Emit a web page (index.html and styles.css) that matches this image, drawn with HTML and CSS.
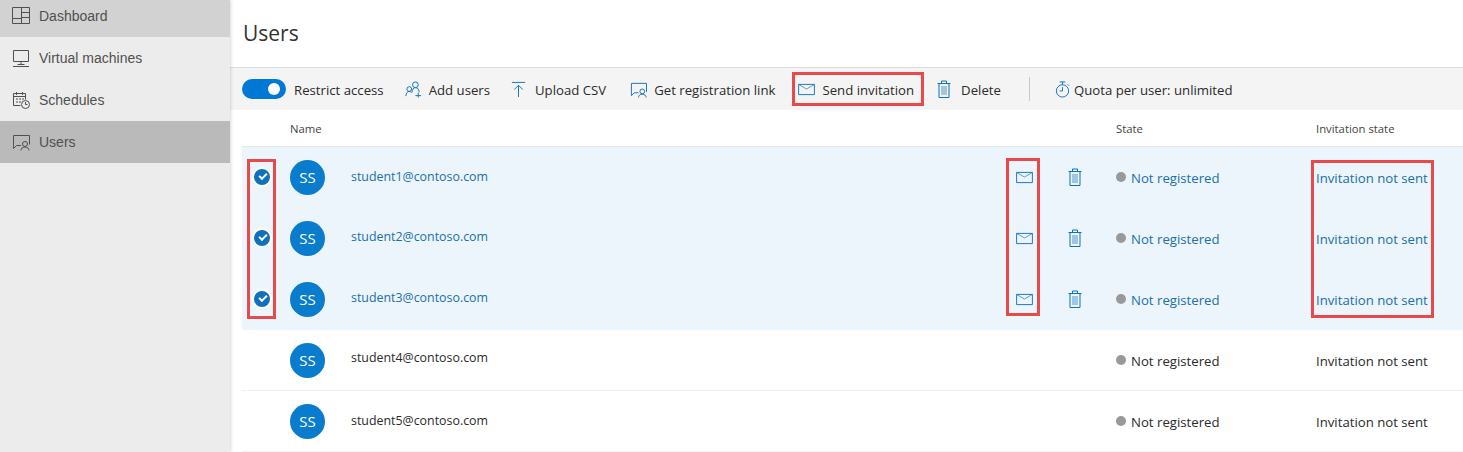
FILE: index.html
```html
<!DOCTYPE html>
<html lang="en">
<head>
  <meta charset="UTF-8">
  <title>Lab Services - Users</title>
  <link rel="stylesheet" href="styles.css">
</head>
<body>
  <svg class="defs" width="0" height="0">
    <symbol id="i-dashboard" viewBox="0 0 18 18"><path d="M.5 .5h17v16H.5zM9.500 .5v16M.5 11.500h9M9.500 5.500h8M9.500 10.500h8"/></symbol>
    <symbol id="i-vm" viewBox="0 0 18 18"><path d="M1.500 1.500h15v11h-15zM9 12.500v3M5.500 15.500h7M1 17.500h16"/></symbol>
    <symbol id="i-schedule" viewBox="0 0 18 18"><path d="M8.500 14.500H1.500v-12h12v6M1.500 5.500h12M4.500 1v3M10.500 1v3M4 8h2M7 8h2M10 8h2M4 11h2M7 11h2"/><circle cx="13.500" cy="13.500" r="4"/><path d="M13.500 11v2.500h2"/></symbol>
    <symbol id="i-users" viewBox="0 0 18 18"><path d="M9 12.500H4.500l-3 3v-3h0v-10h16v9"/><circle cx="13" cy="11" r="2.500"/><path d="M9 17.500c0-2 1.500-3.500 4-3.500s4 1.500 4 3.500"/></symbol>
    <symbol id="i-add" viewBox="0 0 18 18"><circle cx="11" cy="4" r="3"/><path d="M7.500 12c0-3 1.500-5 3.500-5 2.500 0 4 2 4 5"/><circle cx="4.500" cy="8.500" r="2.500"/><path d="M1 16c0-3 1.500-5 3.500-5 1 0 2 .5 2.500 1.500M11 15.500h6M14 12.500v5"/></symbol>
    <symbol id="i-upload" viewBox="0 0 18 18"><path d="M2 1.500h14M9 17V4.500M4.500 9 9 4.500 13.500 9"/></symbol>
    <symbol id="i-mail" viewBox="0 0 18 14"><path d="M.5 1.500h17v11H.5z"/><path class="soft" d="M.5 1.500 9 6.500l8.500-5"/></symbol>
    <symbol id="i-trash" viewBox="0 0 14 18"><path d="M.5 3.500h13M2 3.500v14h10v-14M4.500 3.500v-2.500h5v2.500"/><path class="soft" d="M5 6v9M7 6v9M9 6v9"/></symbol>
    <symbol id="i-quota" viewBox="0 0 18 18"><circle cx="9" cy="10.500" r="6.500"/><path d="M6 1h6M9 1v3M9 6.500v4h-3M14.500 3.500l1.500 1.500"/></symbol>
  </svg>

  <div class="app">
    <nav class="sidebar">
      <a class="nav-item nav-hover"><svg class="nav-icon"><use href="#i-dashboard"/></svg>Dashboard</a>
      <a class="nav-item"><svg class="nav-icon"><use href="#i-vm"/></svg>Virtual machines</a>
      <a class="nav-item"><svg class="nav-icon"><use href="#i-schedule"/></svg>Schedules</a>
      <a class="nav-item nav-active"><svg class="nav-icon"><use href="#i-users"/></svg>Users</a>
    </nav>

    <main class="content">
      <h1 class="title">Users</h1>

      <div class="toolbar">
        <span class="tool tool-restrict"><span class="toggle"></span>Restrict access</span>
        <span class="tool"><svg class="tool-icon"><use href="#i-add"/></svg>Add users</span>
        <span class="tool tool-upload"><svg class="tool-icon"><use href="#i-upload"/></svg>Upload CSV</span>
        <span class="tool tool-link"><svg class="tool-icon"><use href="#i-users"/></svg>Get registration link</span>
        <span class="tool tool-marked"><svg class="tool-icon mail-icon"><use href="#i-mail"/></svg>Send invitation</span>
        <span class="tool"><svg class="tool-icon trash-icon"><use href="#i-trash"/></svg>Delete</span>
        <span class="separator"></span>
        <span class="tool tool-quota"><svg class="tool-icon"><use href="#i-quota"/></svg>Quota per user: unlimited</span>
      </div>

      <div class="table">
        <div class="row head">
          <span></span>
          <span class="head-name">Name</span>
          <span></span>
          <span></span>
          <span>State</span>
          <span>Invitation state</span>
        </div>

        <div class="rows">
          <div class="row user selected">
            <span class="check"></span>
            <span class="avatar">SS</span>
            <span class="email">student1@contoso.com</span>
            <span class="actions"><svg class="row-mail"><use href="#i-mail"/></svg><svg class="row-trash"><use href="#i-trash"/></svg></span>
            <span class="state">Not registered</span>
            <span class="invite">Invitation not sent</span>
          </div>
          <div class="row user selected">
            <span class="check"></span>
            <span class="avatar">SS</span>
            <span class="email">student2@contoso.com</span>
            <span class="actions"><svg class="row-mail"><use href="#i-mail"/></svg><svg class="row-trash"><use href="#i-trash"/></svg></span>
            <span class="state">Not registered</span>
            <span class="invite">Invitation not sent</span>
          </div>
          <div class="row user selected">
            <span class="check"></span>
            <span class="avatar">SS</span>
            <span class="email">student3@contoso.com</span>
            <span class="actions"><svg class="row-mail"><use href="#i-mail"/></svg><svg class="row-trash"><use href="#i-trash"/></svg></span>
            <span class="state">Not registered</span>
            <span class="invite">Invitation not sent</span>
          </div>
          <div class="row user">
            <span></span>
            <span class="avatar">SS</span>
            <span class="email">student4@contoso.com</span>
            <span></span>
            <span class="state">Not registered</span>
            <span class="invite">Invitation not sent</span>
          </div>
          <div class="row user">
            <span></span>
            <span class="avatar">SS</span>
            <span class="email">student5@contoso.com</span>
            <span></span>
            <span class="state">Not registered</span>
            <span class="invite">Invitation not sent</span>
          </div>

          <!-- red annotation boxes drawn over the table -->
          <div class="mark mark-check"></div>
          <div class="mark mark-mail"></div>
          <div class="mark mark-invite"></div>
        </div>
      </div>
    </main>
  </div>
</body>
</html>
```

FILE: styles.css
```css
html, body {
  margin: 0;
  height: 452px;
  overflow: hidden;
  background-color: #fff;
}
.defs {
  position: absolute;
}
symbol path, symbol circle {
  fill: none;
  stroke: currentColor;
  stroke-width: 1;
}
symbol .soft {
  stroke-opacity: 0.7;
}
.app {
  display: flex;
  height: 452px;
}

/* sidebar */
.sidebar {
  width: 230px;
  flex: none;
  background-color: #ececec;
  box-shadow: 1px 0 3px rgba(0, 0, 0, 0.15);
  z-index: 1;
  font-family: "Liberation Sans", Arial, sans-serif;
  font-size: 14px;
  color: #505050;
}
.nav-item {
  display: flex;
  align-items: center;
  height: 42px;
  padding-left: 12px;
}
.nav-item:first-child {
  margin-top: -5px;
}
.nav-hover {
  background-color: #d2d2d2;
}
.nav-active {
  background-color: #bababa;
}
.nav-icon {
  width: 18px;
  height: 18px;
  margin-right: 9px;
  color: #505050;
  flex: none;
}

/* main column */
.content {
  flex: 1;
  min-width: 0;
  font-family: "Open Sans", sans-serif;
  font-size: 13.2px;
  color: #2a2a2a;
}
.title {
  margin: 0;
  height: 67px;
  padding: 18px 0 0 13px;
  box-sizing: border-box;
  font-size: 21px;
  font-weight: 400;
  line-height: 30px;
  color: #333;
}
.toolbar {
  display: flex;
  align-items: center;
  gap: 22px;
  height: 42px;
  padding-left: 12px;
  border-top: 1px solid #ddd;
  background-color: #f4f4f4;
}
.tool {
  display: flex;
  align-items: center;
  white-space: nowrap;
  position: relative;
  padding-top: 2px;
}
.tool-restrict {
  margin-right: -1px;
}
.tool-upload {
  margin-left: -2px;
}
.tool-upload .tool-icon {
  margin-right: 8px;
}
.tool-link {
  margin-left: 2px;
}
.toggle {
  position: relative;
  width: 44px;
  height: 20px;
  margin: -2px 8px 0 0;
  border-radius: 10px;
  background-color: #0078d4;
}
.toggle::after {
  content: "";
  position: absolute;
  top: 4px;
  right: 6px;
  width: 12px;
  height: 12px;
  border-radius: 50%;
  background-color: #fff;
}
.tool-icon {
  width: 17px;
  height: 17px;
  margin: -2px 7px 0 0;
  color: #0f70bd;
  flex: none;
}
.mail-icon {
  height: 13px;
}
.trash-icon {
  width: 14px;
  height: 18px;
  margin-right: 10px;
}
.tool-marked {
  margin: 0 1px 0 1px;
}
.tool-marked::after {
  content: "";
  position: absolute;
  left: -6px;
  right: -10px;
  top: -7px;
  bottom: -7px;
  border: 3px solid #e8494a;
}
.separator {
  width: 1px;
  height: 24px;
  margin: 0 2px 0 6px;
  background-color: #c8c8c8;
}
.tool-quota .tool-icon {
  margin-right: 3px;
}

/* table */
.row {
  display: grid;
  grid-template-columns: 48px 61px 665px 100px 200px 147px;
  align-items: center;
  margin-left: 12px;
}
.head {
  height: 37px;
  box-sizing: border-box;
  border-bottom: 1px solid #e6e6e6;
  font-size: 11.3px;
  color: #444;
}
.rows {
  position: relative;
}
.user {
  height: 61px;
  box-sizing: border-box;
  border-bottom: 1px solid #f1f1f1;
}
.selected {
  background-color: #edf5fc;
  border-bottom-color: #edf5fc;
  color: #206fa8;
}
.check {
  position: relative;
  width: 16px;
  height: 16px;
  margin-left: 10px;
  border: 2px solid #fff;
  border-radius: 50%;
  background-color: #0f70bd;
}
.check::after {
  content: "";
  position: absolute;
  left: 5px;
  top: 4px;
  width: 6px;
  height: 3px;
  border-left: 2px solid #fff;
  border-bottom: 2px solid #fff;
  transform: rotate(-45deg);
}
.avatar {
  display: flex;
  align-items: center;
  justify-content: center;
  width: 35px;
  height: 35px;
  border-radius: 50%;
  background-color: #0a7cce;
  color: #fff;
  font-size: 15px;
}
.email {
  font-size: 12.4px;
  transform: translateY(-2px);
}
/* the source rows sit a pixel off from each other */
.user:nth-child(1) .email, .user:nth-child(5) .email {
  transform: translateY(-1px);
}
.user:nth-child(4) .email {
  transform: translateY(-3px);
}
.actions {
  display: flex;
  align-items: center;
  color: #0f70bd;
}
.row-mail {
  width: 17px;
  height: 13px;
  margin-right: 35px;
}
.row-trash {
  width: 14px;
  height: 18px;
}
.state {
  display: flex;
  align-items: center;
  padding-top: 2px;
}
.state::before {
  content: "";
  width: 10px;
  height: 10px;
  margin: -3px 5px 0 0;
  border-radius: 50%;
  background-color: #999;
}
.invite {
  padding-top: 2px;
}
.mark {
  position: absolute;
  border: 3px solid #e8494a;
  box-sizing: border-box;
}
.mark-check {
  left: 17px;
  top: 12px;
  width: 29px;
  height: 160px;
}
.mark-mail {
  left: 776px;
  top: 11px;
  width: 34px;
  height: 158px;
}
.mark-invite {
  left: 1081px;
  top: 13px;
  width: 123px;
  height: 158px;
}
```
